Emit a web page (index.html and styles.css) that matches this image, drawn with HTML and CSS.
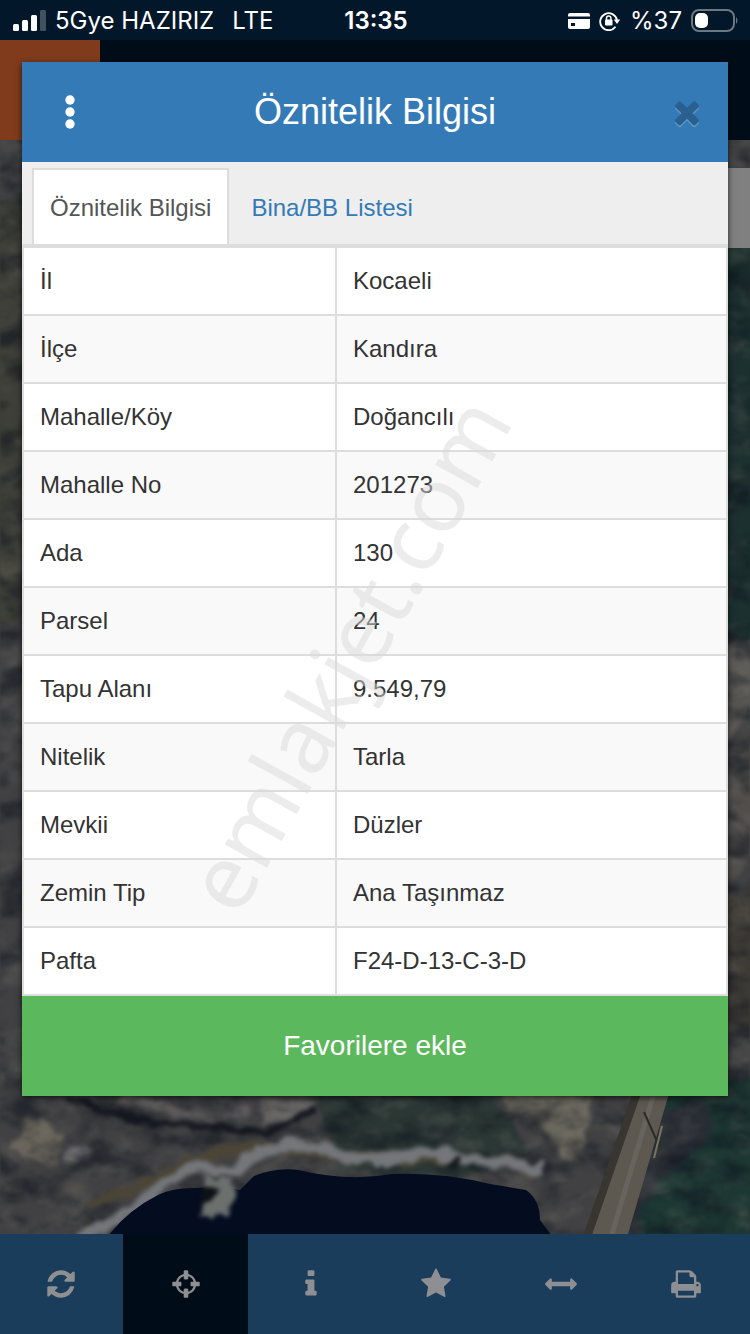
FILE: index.html
```html
<!DOCTYPE html>
<html lang="tr">
<head>
    <meta charset="UTF-8">
    <meta name="viewport" content="width=device-width, initial-scale=1.0">
    <title>Öznitelik Bilgisi</title>
    <link rel="stylesheet" href="styles.css">
</head>
<body>
    <header class="status-bar">
        <div class="status-left">
            <svg width="33" height="22" viewBox="0 0 33 22" fill="#fff" aria-hidden="true">
                <rect x="0" y="14" width="6" height="7" rx="1.5"/>
                <rect x="9" y="10" width="6" height="11" rx="1.5"/>
                <rect x="18" y="5" width="6" height="16" rx="1.5"/>
                <rect x="27" y="0" width="6" height="21" rx="1.5" opacity=".25"/>
            </svg>
            <span>5Gye HAZIRIZ</span>
            <span class="network">LTE</span>
        </div>
        <div class="clock">13:35</div>
        <div class="status-right">
            <svg width="22" height="16" viewBox="0 0 22 16" fill="#fff" aria-hidden="true">
                <path d="M2 0h18a2 2 0 0 1 2 2v1.500H0V2a2 2 0 0 1 2-2zM0 6h22v8a2 2 0 0 1-2 2H2a2 2 0 0 1-2-2zm3 4v3h4v-3z" fill-rule="evenodd"/>
            </svg>
            <svg width="22" height="20" viewBox="0 0 22 20" fill="none" stroke="#fff" aria-hidden="true">
                <path d="M16.500 15.800A8.500 8.500 0 1 1 18 9" stroke-width="1.800"/>
                <path d="M14.800 8.500h6.400L18 13z" fill="#fff" stroke="none"/>
                <rect x="6" y="8.500" width="7.500" height="6" rx="1" fill="#fff" stroke="none"/>
                <path d="M7.500 9V7.200a2.200 2.200 0 0 1 4.400 0V9" stroke-width="1.500"/>
            </svg>
            <span>%37</span>
            <svg width="48" height="24" viewBox="0 0 48 24" aria-hidden="true">
                <rect x="1" y="1" width="42" height="21" rx="7" fill="none" stroke="#6b7781" stroke-width="2"/>
                <rect x="4" y="4" width="13" height="15" rx="5" fill="#fff"/>
                <path d="M45 8q3 3.500 0 7z" fill="#6b7781"/>
            </svg>
        </div>
    </header>

    <div class="app-bar">
        <button class="app-menu" aria-label="Menü"></button>
    </div>

    <main class="map">
        <svg class="map-image" viewBox="0 140 750 1094" preserveAspectRatio="xMidYMax slice" aria-hidden="true">
            <defs>
                <filter id="soft" x="-10%" y="-10%" width="120%" height="120%" color-interpolation-filters="sRGB">
                    <feTurbulence type="fractalNoise" baseFrequency=".05" numOctaves="3" seed="4"/>
                    <feDisplacementMap in="SourceGraphic" scale="16" xChannelSelector="R" yChannelSelector="G"/>
                    <feGaussianBlur stdDeviation="2"/>
                </filter>
                <filter id="grain" x="0" y="0" width="100%" height="100%" color-interpolation-filters="sRGB">
                    <feTurbulence type="fractalNoise" baseFrequency=".03 .045" numOctaves="5" seed="9"/>
                    <feColorMatrix values="0 0 0 0 .5  0 0 0 0 .49  0 0 0 0 .45  2.4 0 0 0 -1.1"/>
                    <feGaussianBlur stdDeviation=".8"/>
                </filter>
                <filter id="shade" x="0" y="0" width="100%" height="100%" color-interpolation-filters="sRGB">
                    <feTurbulence type="fractalNoise" baseFrequency=".025 .04" numOctaves="5" seed="21"/>
                    <feColorMatrix values="0 0 0 0 .04  0 0 0 0 .06  0 0 0 0 .1  0 3 0 0 -1.3"/>
                    <feGaussianBlur stdDeviation=".8"/>
                </filter>
            </defs>
            <rect y="140" width="750" height="1094" fill="#414143"/>
            <g filter="url(#soft)">
                <path d="M-10 200h50v420H-10z" fill="#3e3f38"/>
                <path d="M690 240h80v400h-80z" fill="#1c302f"/>
                <path d="M690 630l70 30v40l-40 50-30 20z" fill="#5c5a56"/>
                <path d="M690 800l70-60v110l-70 70z" fill="#514e4c"/>
                <path d="M690 930l70-50v150h-70z" fill="#3e3b36"/>
                <path d="M668 1080h100v170H615z" fill="#1d3733"/>
                <path d="M650 1110l60-10 0 40-50 40-30 60h-10z" fill="#292e35"/>
                <path d="M310 1080h170l50 70-70 30-120-10z" fill="#2b3734"/>
                <path d="M500 1080h90l0 40-12 40-20-4-20-34-30-10z" fill="#6b685e"/>
                <path d="M32 1112l34 22-10 34-44-18z" fill="#67635a"/>
                <path d="M72 1150l20-6-4 16-28 4z" fill="#6c6b6e"/>
                <path d="M260 1100l50 0-8 18-38 5z" fill="#656262"/>
                <path d="M120 1098q70 20 130 15" fill="none" stroke="#5c5a5a" stroke-width="12"/>
            </g>
            <rect y="140" width="750" height="1094" filter="url(#grain)" opacity=".3"/>
            <rect y="140" width="750" height="1094" filter="url(#shade)" opacity=".5"/>
            <g filter="url(#soft)">
                <path d="M70 1098q90 38 210 30l34-20" fill="none" stroke="#14171f" stroke-width="7"/>
                <path d="M90 1206q50-20 90-40t100-18q80 12 150 10t110 14" fill="none" stroke="#4b4537" stroke-width="12"/>
                <path d="M78 1240q48-22 82-52t50-17l20 0 34-19q30-14 70 0t84 0q60 8 126 16" fill="none" stroke="#74767a" stroke-width="12"/>
            </g>
            <path d="M108 1236q20-26 50-41 16-8 40-7l20-2 22 4 14-14q22-9 44-6 50 12 94 4 50-2 98 10l36 6q14 10 14 30l12 16z" fill="#040c20"/>
            <g filter="url(#soft)">
                <path d="M206 1178l26 0 4 16-6 18-18 8-14-6 12-16z" fill="#6b706d"/>
                <path d="M206 1186l14 0-8 18-12 2z" fill="#0d1115"/>
                <path d="M454 1156l8 0-8 14-8 0z" fill="#15171a"/>
            </g>
            <path d="M641 1090h29l-42 144h-36z" fill="#5d5951"/>
            <path d="M655 1090l-43 144" stroke="#68645d" stroke-width="5"/>
            <path d="M638 1090l-50 144" stroke="#393631" stroke-width="8"/>
            <path d="M644 1112l15 34" stroke="#2b2d24" stroke-width="2"/>
            <path d="M662 1126l-8 32" stroke="#77745c" stroke-width="2"/>
        </svg>
        <button class="map-control" aria-label="Katmanlar"></button>
    </main>

    <nav class="toolbar">
        <button aria-label="Yenile">
            <svg viewBox="0 0 1792 1792"><path d="M1639 1056q0 5-1 7-64 268-268 434.500t-478 166.500q-146 0-282.500-55t-243.500-157l-129 129q-19 19-45 19t-45-19-19-45v-448q0-26 19-45t45-19h448q26 0 45 19t19 45-19 45l-137 137q71 66 161 102t187 36q134 0 250-65t186-179q11-17 53-117 8-23 30-23h192q13 0 22.500 9.500t9.500 22.500zm25-800v448q0 26-19 45t-45 19h-448q-26 0-45-19t-19-45 19-45l138-138q-148-137-349-137-134 0-250 65t-186 179q-11 17-53 117-8 23-30 23h-199q-13 0-22.500-9.500t-9.500-22.500v-7q65-268 270-434.500t480-166.500q146 0 284 55.500t245 156.500l130-129q19-19 45-19t45 19 19 45z"/></svg>
        </button>
        <button class="active" aria-label="Konum">
            <svg viewBox="0 0 1792 1792"><path d="M1325 1024h-109q-26 0-45-19t-19-45v-128q0-26 19-45t45-19h109q-32-108-112.500-188.500t-188.500-112.500v109q0 26-19 45t-45 19h-128q-26 0-45-19t-19-45v-109q-108 32-188.500 112.500t-112.500 188.500h109q26 0 45 19t19 45v128q0 26-19 45t-45 19h-109q32 108 112.500 188.500t188.500 112.500v-109q0-26 19-45t45-19h128q26 0 45 19t19 45v109q108-32 188.500-112.500t112.500-188.500zm339-192v128q0 26-19 45t-45 19h-143q-37 161-154.500 278.500t-278.500 154.500v143q0 26-19 45t-45 19h-128q-26 0-45-19t-19-45v-143q-161-37-278.500-154.500t-154.500-278.500h-143q-26 0-45-19t-19-45v-128q0-26 19-45t45-19h143q37-161 154.500-278.500t278.500-154.500v-143q0-26 19-45t45-19h128q26 0 45 19t19 45v143q161 37 278.500 154.500t154.500 278.500h143q26 0 45 19t19 45z"/></svg>
        </button>
        <button aria-label="Bilgi">
            <svg viewBox="0 0 1792 1792"><path d="M1216 1344v128q0 26-19 45t-45 19h-512q-26 0-45-19t-19-45v-128q0-26 19-45t45-19h64v-384h-64q-26 0-45-19t-19-45v-128q0-26 19-45t45-19h384q26 0 45 19t19 45v576h64q26 0 45 19t19 45zm-128-1152v192q0 26-19 45t-45 19h-256q-26 0-45-19t-19-45v-192q0-26 19-45t45-19h256q26 0 45 19t19 45z"/></svg>
        </button>
        <button aria-label="Favoriler">
            <svg viewBox="0 0 1792 1792"><path d="M1728 647q0 22-26 48l-363 354 86 500q1 7 1 20 0 21-10.500 35.500t-30.500 14.500q-19 0-40-12l-449-236-449 236q-22 12-40 12-21 0-31.500-14.500t-10.500-35.500q0-6 2-20l86-500-364-354q-25-27-25-48 0-37 56-46l502-73 225-455q19-41 49-41t49 41l225 455 502 73q56 9 56 46z"/></svg>
        </button>
        <button aria-label="Ölçüm">
            <svg viewBox="0 0 1792 1792"><path d="M1792 896q0 26-19 45l-256 256q-19 19-45 19t-45-19-19-45v-128h-1024v128q0 26-19 45t-45 19-45-19l-256-256q-19-19-19-45t19-45l256-256q19-19 45-19t45 19 19 45v128h1024v-128q0-26 19-45t45-19 45 19l256 256q19 19 19 45z"/></svg>
        </button>
        <button aria-label="Yazdır">
            <svg viewBox="0 0 1792 1792"><path d="M448 1536h896v-256h-896v256zm0-640h896v-384h-160q-40 0-68-28t-28-68v-160h-640v640zm1152 64q0-26-19-45t-45-19-45 19-19 45 19 45 45 19 45-19 19-45zm128 0v416q0 13-9.500 22.500t-22.500 9.500h-224v160q0 40-28 68t-68 28h-960q-40 0-68-28t-28-68v-160h-224q-13 0-22.500-9.500t-9.500-22.500v-416q0-79 56.500-135.500t135.500-56.500h64v-544q0-40 28-68t68-28h672q40 0 88 20t76 48l152 152q28 28 48 76t20 88v256h64q79 0 135.500 56.500t56.500 135.500z"/></svg>
        </button>
    </nav>

    <!-- Parsel bilgi penceresi -->
    <section class="dialog" role="dialog" aria-labelledby="dialog-title">
        <div class="dialog-header">
            <button class="icon-button" aria-label="Seçenekler">
                <svg width="36" height="36" viewBox="0 0 36 36" fill="#fff">
                    <circle cx="18" cy="6" r="4.700"/>
                    <circle cx="18" cy="18" r="4.700"/>
                    <circle cx="18" cy="30" r="4.700"/>
                </svg>
            </button>
            <h1 id="dialog-title">Öznitelik Bilgisi</h1>
            <button class="icon-button close" aria-label="Kapat">
                <svg width="36" height="36" viewBox="0 0 1792 1792"><path d="M1490 1322q0 40-28 68l-136 136q-28 28-68 28t-68-28l-294-294-294 294q-28 28-68 28t-68-28l-136-136q-28-28-28-68t28-68l294-294-294-294q-28-28-28-68t28-68l136-136q28-28 68-28t68 28l294 294 294-294q28-28 68-28t68 28l136 136q28 28 28 68t-28 68l-294 294 294 294q28 28 28 68z"/></svg>
            </button>
        </div>
        <div class="tabs">
            <a href="#oznitelik" class="tab active">Öznitelik Bilgisi</a>
            <a href="#bina" class="tab">Bina/BB Listesi</a>
        </div>
        <table class="info-table" id="oznitelik">
            <tr><th scope="row">İl</th><td>Kocaeli</td></tr>
            <tr><th scope="row">İlçe</th><td>Kandıra</td></tr>
            <tr><th scope="row">Mahalle/Köy</th><td>Doğancılı</td></tr>
            <tr><th scope="row">Mahalle No</th><td>201273</td></tr>
            <tr><th scope="row">Ada</th><td>130</td></tr>
            <tr><th scope="row">Parsel</th><td>24</td></tr>
            <tr><th scope="row">Tapu Alanı</th><td>9.549,79</td></tr>
            <tr><th scope="row">Nitelik</th><td>Tarla</td></tr>
            <tr><th scope="row">Mevkii</th><td>Düzler</td></tr>
            <tr><th scope="row">Zemin Tip</th><td>Ana Taşınmaz</td></tr>
            <tr><th scope="row">Pafta</th><td>F24-D-13-C-3-D</td></tr>
        </table>
        <button class="favorite">Favorilere ekle</button>
        <div class="watermark">emlakjet.com</div>
    </section>
</body>
</html>
```
FILE: styles.css
```css
* {
    box-sizing: border-box;
}
body {
    margin: 0;
    min-height: 100vh;
    display: flex;
    flex-direction: column;
    position: relative;
    overflow-x: hidden;
    background: #02182a;
    color: #333;
    font-family: "Liberation Sans", Arial, sans-serif;
    font-size: 24px;
}
button {
    border: none;
    padding: 0;
    margin: 0;
    background: none;
    font: inherit;
    cursor: pointer;
}
svg {
    display: block;
}

/* Durum çubuğu */
.status-bar {
    height: 40px;
    padding: 1px 11px 0 13px;
    display: grid;
    grid-template-columns: 1fr auto 1fr;
    align-items: center;
    background: #02182a;
    color: #fff;
    font-family: Inter, sans-serif;
    font-size: 24px;
}
.status-left,
.status-right {
    display: flex;
    align-items: center;
    gap: 9px;
}
.status-right {
    justify-content: flex-end;
}
.network {
    margin-left: 9px;
}
.clock {
    font-weight: 600;
}

.app-bar {
    height: 100px;
    background: #000d18;
}
.app-menu {
    display: block;
    width: 100px;
    height: 100px;
    background: #7f3b1c;
}

/* Harita */
.map {
    flex: 1;
    position: relative;
    overflow: hidden;
}
.map-image {
    position: absolute;
    inset: 0;
    width: 100%;
    height: 100%;
}
.map-control {
    position: absolute;
    top: 28px;
    right: 0;
    width: 80px;
    height: 80px;
    background: #808080;
}

/* Alt menü */
.toolbar {
    display: grid;
    grid-template-columns: repeat(6, 1fr);
    height: 100px;
    margin-left: -2px;
    padding-right: 2px;
    background: #1b3d5c;
}
.toolbar button {
    display: flex;
    align-items: center;
    justify-content: center;
}
.toolbar .active {
    background: #000d18;
}
.toolbar svg {
    width: 32px;
    height: 32px;
    fill: #8d8f92;
}

/* Pencere */
.dialog {
    position: absolute;
    top: 62px;
    left: 22px;
    right: 22px;
    background: #fff;
    box-shadow: 0 2px 6px rgba(0, 0, 0, 0.7);
}
.dialog-header {
    display: flex;
    align-items: center;
    height: 100px;
    background: #337ab7;
    color: #fff;
}
.dialog-header h1 {
    flex: 1;
    margin: 0;
    font-size: 36px;
    font-weight: normal;
    text-align: center;
}
.icon-button {
    display: flex;
    align-items: center;
    justify-content: center;
    width: 96px;
    height: 100px;
}
.close {
    padding-left: 14px;
    fill: #2a6090;
}
.close svg {
    filter: drop-shadow(0 2px 0 rgba(255, 255, 255, 0.2));
}
.tabs {
    display: flex;
    gap: 4px;
    padding: 6px 10px 0;
    background: #eee;
    border-bottom: 2px solid #ddd;
}
.tab {
    padding: 22px 16px 20px;
    border: 2px solid transparent;
    border-bottom: none;
    line-height: 32px;
    color: #337ab7;
    text-decoration: none;
}
.tab.active {
    background: #fff;
    border-color: #ddd;
    color: #555;
}
.info-table {
    width: 100%;
    table-layout: fixed;
    border-collapse: collapse;
    border: 2px solid #ddd;
}
.info-table th,
.info-table td {
    height: 68px;
    padding: 0 16px;
    border: 2px solid #ddd;
    font-weight: normal;
    text-align: left;
}
.info-table th {
    width: 313px;
}
.info-table tr:nth-child(even) {
    background: #f9f9f9;
}
.favorite {
    display: block;
    width: 100%;
    height: 100px;
    background: #5cb85c;
    color: #fff;
    font-size: 28px;
}
.watermark {
    position: absolute;
    top: 591px;
    left: 324px;
    transform: translate(-50%, -50%) rotate(-61deg);
    font-family: "Noto Sans", sans-serif;
    font-size: 90px;
    line-height: 1;
    color: rgba(218, 218, 218, 0.5);
    pointer-events: none;
}
```
